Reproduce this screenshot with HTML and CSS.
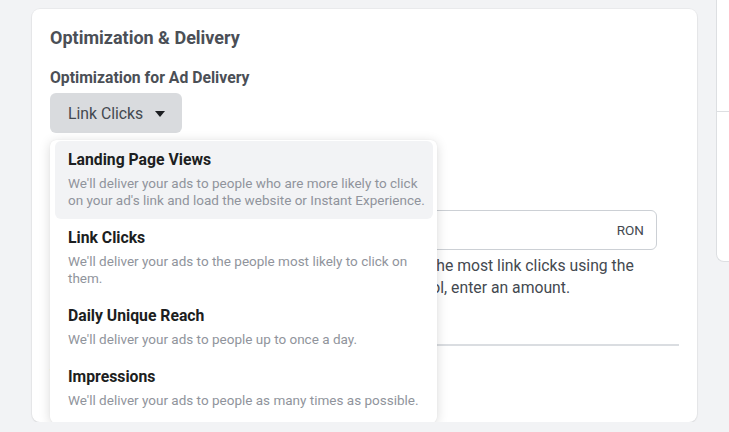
FILE: index.html
```html
<!DOCTYPE html>
<html lang="en">

<head>
    <meta charset="UTF-8">
    <meta name="viewport" content="width=device-width, initial-scale=1.0">
    <title>Optimization &amp; Delivery</title>
    <link rel="stylesheet" href="styles.css">
</head>

<body>
    <div class="page">
        <section class="card">
            <h2 class="card-title">Optimization &amp; Delivery</h2>

            <div class="field">
                <div class="field-label">Optimization for Ad Delivery</div>
                <div class="select-wrap">
                    <button class="select-btn">Link Clicks <span class="caret"></span></button>

                    <ul class="menu">
                        <li class="menu-item active">
                            <div class="item-title">Landing Page Views</div>
                            <div class="item-desc">We'll deliver your ads to people who are more likely to click on your ad's link and load the website or Instant Experience.</div>
                        </li>
                        <li class="menu-item">
                            <div class="item-title">Link Clicks</div>
                            <div class="item-desc">We'll deliver your ads to the people most likely to click on them.</div>
                        </li>
                        <li class="menu-item">
                            <div class="item-title">Daily Unique Reach</div>
                            <div class="item-desc">We'll deliver your ads to people up to once a day.</div>
                        </li>
                        <li class="menu-item">
                            <div class="item-title">Impressions</div>
                            <div class="item-desc">We'll deliver your ads to people as many times as possible.</div>
                        </li>
                    </ul>
                </div>
            </div>

            <div class="field cost">
                <div class="field-label">Cost Control (optional)</div>
                <div class="money-input">
                    <input type="text" placeholder="">
                    <span class="currency">RON</span>
                </div>
                <p class="hint">Facebook will aim to spend your entire budget and get the most link clicks using the<br>lowest cost bid strategy. If you want to set a cost control, enter an amount.</p>
            </div>

            <hr class="divider">

            <div class="field">
                <div class="field-label">When You Get Charged</div>
            </div>
        </section>

        <aside class="side">
            <div class="side-top"></div>
            <div class="side-bottom"></div>
        </aside>
    </div>
</body>

</html>
```

FILE: styles.css
```css
* {
    box-sizing: border-box;
}

body {
    margin: 0;
    background-color: #f2f3f5;
    font-family: Roboto, "Liberation Sans", Arial, sans-serif;
    overflow: hidden;
}

.page {
    display: flex;
    align-items: flex-start;
    gap: 19px;
    padding-left: 32px;
    width: 729px;
}

.card {
    width: 665px;
    height: 413px;
    margin-top: 9px;
    padding: 19px 18px;
    background: white;
    border-radius: 8px;
    box-shadow: 0 0 0 1px rgba(0, 0, 0, 0.03), 0 1px 2px rgba(0, 0, 0, 0.08);
}

.card-title {
    margin: 0;
    font-size: 18px;
    line-height: 20px;
    font-weight: bold;
    color: #4b4f56;
}

.field {
    margin-top: 21px;
}

.field-label {
    font-size: 15.75px;
    line-height: 18px;
    font-weight: bold;
    color: #4b4f56;
}

.select-wrap {
    position: relative;
    margin-top: 6px;
}

.select-btn {
    display: inline-flex;
    align-items: center;
    gap: 12px;
    height: 40px;
    padding: 0 17px 0 18px;
    border: none;
    border-radius: 6px;
    background: #d9dbde;
    font-family: inherit;
    font-size: 15.75px;
    color: #444950;
}

.caret {
    width: 0;
    height: 0;
    border-left: 5.5px solid transparent;
    border-right: 5.5px solid transparent;
    border-top: 6px solid #1c1e21;
    margin-top: 2px;
}

.menu {
    position: absolute;
    top: 47px;
    left: 0;
    z-index: 2;
    width: 387px;
    margin: 0;
    padding: 1px 4px 4px 5px;
    list-style: none;
    background: white;
    border-radius: 6px;
    box-shadow: 0 2px 12px rgba(0, 0, 0, 0.15), 0 0 1px rgba(0, 0, 0, 0.1);
}

.menu-item {
    padding: 9px 6px 10px 13px;
    border-radius: 6px;
}

.menu-item.active {
    background: #f2f3f5;
}

.item-title {
    font-size: 15.75px;
    line-height: 19px;
    font-weight: bold;
    color: #1c1e21;
}

.item-desc {
    margin-top: 6px;
    font-size: 13.5px;
    line-height: 17px;
    color: #90949c;
}

.cost {
    margin-top: 40px;
}

.money-input {
    display: flex;
    align-items: center;
    width: 607px;
    height: 40px;
    margin-top: 19px;
    padding: 0 12px;
    border: 1px solid #ccd0d5;
    border-radius: 6px;
}

.money-input input {
    flex: 1;
    border: none;
    outline: none;
    font-family: inherit;
}

.currency {
    font-size: 13.5px;
    color: #444950;
}

.hint {
    margin: 5px 0 0;
    font-size: 15.75px;
    line-height: 22px;
    color: #444950;
    white-space: nowrap;
}

.divider {
    margin: 45px 0 0;
    border: none;
    border-top: 2px solid #dadde1;
}

.side {
    flex: 1;
    height: 262px;
    background: white;
    border-left: 1px solid #dddfe2;
    border-bottom: 1px solid #dddfe2;
    border-bottom-left-radius: 8px;
}

.side-top {
    height: 112px;
    border-bottom: 1px solid #dddfe2;
}
```
